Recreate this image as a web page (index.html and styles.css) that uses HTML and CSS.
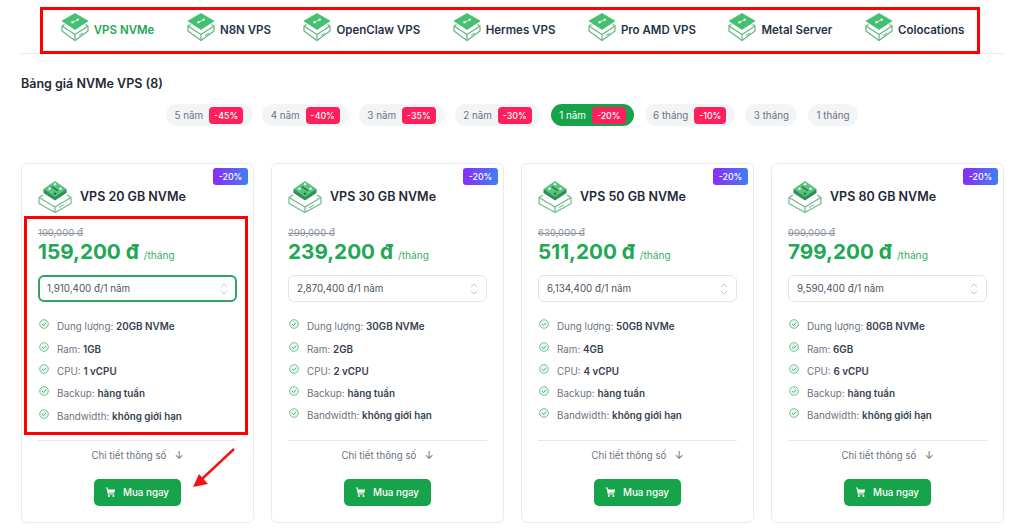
FILE: index.html
```html
<!DOCTYPE html>
<html lang="vi">
<head>
<meta charset="utf-8">
<title>Bảng giá NVMe VPS</title>
<link rel="stylesheet" href="styles.css">
</head>
<body>
<svg class="defs" width="0" height="0" aria-hidden="true">
  <symbol id="srv" viewBox="0 0 28 28">
    <path d="M3.5 11.5 L1 13 V18 L14 27.5 L27 18 V13 L24.5 11.5" fill="#fff" stroke="#62b583" stroke-width="1.2" stroke-linejoin="round"/>
    <path d="M1 13 L14 21.5 L27 13 M14 21.5 V27.5" fill="none" stroke="#62b583" stroke-width="1.2" stroke-linejoin="round"/>
    <path d="M18 22.5 L22 20" stroke="#62b583" stroke-width="1"/>
    <path d="M14 .5 L27 8 L14 16.5 L1 8 Z" fill="#45bf70" stroke="#45bf70" stroke-width=".8" stroke-linejoin="round"/>
    <path d="M11.5 9.3 L14.5 7.8 L16.8 6.6" stroke="#eafaf0" stroke-width=".9" fill="none"/>
    <circle cx="11.5" cy="9.3" r="1.2" fill="#eafaf0"/><circle cx="16.8" cy="6.6" r="1.2" fill="#eafaf0"/>
  </symbol>
  <symbol id="box" viewBox="0 0 34 33">
    <path d="M5 15 L1 17.5 V23.5 L17 32.5 L33 23.5 V17.5 L29 15" fill="#fff" stroke="#6fb98a" stroke-width="1.2" stroke-linejoin="round"/>
    <path d="M1 17.5 L17 27 L33 17.5 M17 27 V32.5" fill="none" stroke="#6fb98a" stroke-width="1.2" stroke-linejoin="round"/>
    <path d="M21 27.5 L26 24.8" stroke="#6fb98a" stroke-width="1"/>
    <path d="M5.5 9 V13 L17 20.5 L28.5 13 V9 Z" fill="#2f8f55"/>
    <path d="M17 1 L28.5 9 L17 17 L5.5 9 Z" fill="#57c47c"/>
    <circle cx="17" cy="4.2" r="1.2" fill="#f2fff6"/><circle cx="11.5" cy="8.8" r="1.2" fill="#f2fff6"/><circle cx="22.5" cy="8.8" r="1.2" fill="#f2fff6"/><circle cx="17" cy="13.6" r="1.2" fill="#1f6b3d"/>
    <path d="M14 6.8 L20 10.8" stroke="#1f6b3d" stroke-width="1.1"/>
  </symbol>
  <symbol id="chk" viewBox="0 0 12 12">
    <circle cx="6" cy="6" r="5.2" fill="#eaf7ef" stroke="#5cb982" stroke-width="1"/>
    <path d="M3.6 6.1 L5.4 7.8 L8.5 4.5" fill="none" stroke="#3da768" stroke-width="1.1"/>
  </symbol>
  <symbol id="cart" viewBox="0 0 12 12">
    <path d="M.8 1.2 H2.4 L3.6 7.6 H10" fill="none" stroke="#fff" stroke-width="1.1"/>
    <path d="M2.8 2.6 H11 L10.2 6.2 H3.4 Z" fill="#fff"/>
    <circle cx="4.2" cy="9.8" r="1.1" fill="#fff"/><circle cx="9.2" cy="9.8" r="1.1" fill="#fff"/>
  </symbol>
</svg>

<div class="page">
  <nav class="nav">
    <a class="nav-item active"><svg class="nav-icon"><use href="#srv"/></svg>VPS NVMe</a>
    <a class="nav-item"><svg class="nav-icon"><use href="#srv"/></svg>N8N VPS</a>
    <a class="nav-item"><svg class="nav-icon"><use href="#srv"/></svg>OpenClaw VPS</a>
    <a class="nav-item"><svg class="nav-icon"><use href="#srv"/></svg>Hermes VPS</a>
    <a class="nav-item"><svg class="nav-icon"><use href="#srv"/></svg>Pro AMD VPS</a>
    <a class="nav-item"><svg class="nav-icon"><use href="#srv"/></svg>Metal Server</a>
    <a class="nav-item"><svg class="nav-icon"><use href="#srv"/></svg>Colocations</a>
  </nav>

  <h2 class="title">Bảng giá NVMe VPS (8)</h2>

  <div class="tabs">
    <span class="tab">5 năm<b class="off">-45%</b></span>
    <span class="tab">4 năm<b class="off">-40%</b></span>
    <span class="tab">3 năm<b class="off">-35%</b></span>
    <span class="tab">2 năm<b class="off">-30%</b></span>
    <span class="tab on">1 năm<b class="off">-20%</b></span>
    <span class="tab">6 tháng<b class="off">-10%</b></span>
    <span class="tab">3 tháng</span>
    <span class="tab">1 tháng</span>
  </div>

  <div class="cards">
    <article class="card">
      <span class="badge">-20%</span>
      <header class="card-head"><svg class="card-icon"><use href="#box"/></svg><h3>VPS 20 GB NVMe</h3></header>
      <div class="old">199,000 đ</div>
      <div class="price"><strong>159,200 đ</strong><span>/tháng</span></div>
      <div class="select focus">1,910,400 đ/1 năm<svg class="updown" viewBox="0 0 8 14"><path d="M1 5 L4 2 L7 5 M1 9 L4 12 L7 9"/></svg></div>
      <ul class="specs">
        <li><svg class="check"><use href="#chk"/></svg><span>Dung lượng: <b>20GB NVMe</b></span></li>
        <li><svg class="check"><use href="#chk"/></svg><span>Ram: <b>1GB</b></span></li>
        <li><svg class="check"><use href="#chk"/></svg><span>CPU: <b>1 vCPU</b></span></li>
        <li><svg class="check"><use href="#chk"/></svg><span>Backup: <b>hàng tuần</b></span></li>
        <li><svg class="check"><use href="#chk"/></svg><span>Bandwidth: <b>không giới hạn</b></span></li>
      </ul>
      <div class="more">Chi tiết thông số<span class="arrow">↓</span></div>
      <a class="buy"><svg class="cart"><use href="#cart"/></svg>Mua ngay</a>
    </article>

    <article class="card">
      <span class="badge">-20%</span>
      <header class="card-head"><svg class="card-icon"><use href="#box"/></svg><h3>VPS 30 GB NVMe</h3></header>
      <div class="old">299,000 đ</div>
      <div class="price"><strong>239,200 đ</strong><span>/tháng</span></div>
      <div class="select">2,870,400 đ/1 năm<svg class="updown" viewBox="0 0 8 14"><path d="M1 5 L4 2 L7 5 M1 9 L4 12 L7 9"/></svg></div>
      <ul class="specs">
        <li><svg class="check"><use href="#chk"/></svg><span>Dung lượng: <b>30GB NVMe</b></span></li>
        <li><svg class="check"><use href="#chk"/></svg><span>Ram: <b>2GB</b></span></li>
        <li><svg class="check"><use href="#chk"/></svg><span>CPU: <b>2 vCPU</b></span></li>
        <li><svg class="check"><use href="#chk"/></svg><span>Backup: <b>hàng tuần</b></span></li>
        <li><svg class="check"><use href="#chk"/></svg><span>Bandwidth: <b>không giới hạn</b></span></li>
      </ul>
      <div class="more">Chi tiết thông số<span class="arrow">↓</span></div>
      <a class="buy"><svg class="cart"><use href="#cart"/></svg>Mua ngay</a>
    </article>

    <article class="card">
      <span class="badge">-20%</span>
      <header class="card-head"><svg class="card-icon"><use href="#box"/></svg><h3>VPS 50 GB NVMe</h3></header>
      <div class="old">639,000 đ</div>
      <div class="price"><strong>511,200 đ</strong><span>/tháng</span></div>
      <div class="select">6,134,400 đ/1 năm<svg class="updown" viewBox="0 0 8 14"><path d="M1 5 L4 2 L7 5 M1 9 L4 12 L7 9"/></svg></div>
      <ul class="specs">
        <li><svg class="check"><use href="#chk"/></svg><span>Dung lượng: <b>50GB NVMe</b></span></li>
        <li><svg class="check"><use href="#chk"/></svg><span>Ram: <b>4GB</b></span></li>
        <li><svg class="check"><use href="#chk"/></svg><span>CPU: <b>4 vCPU</b></span></li>
        <li><svg class="check"><use href="#chk"/></svg><span>Backup: <b>hàng tuần</b></span></li>
        <li><svg class="check"><use href="#chk"/></svg><span>Bandwidth: <b>không giới hạn</b></span></li>
      </ul>
      <div class="more">Chi tiết thông số<span class="arrow">↓</span></div>
      <a class="buy"><svg class="cart"><use href="#cart"/></svg>Mua ngay</a>
    </article>

    <article class="card">
      <span class="badge">-20%</span>
      <header class="card-head"><svg class="card-icon"><use href="#box"/></svg><h3>VPS 80 GB NVMe</h3></header>
      <div class="old">999,000 đ</div>
      <div class="price"><strong>799,200 đ</strong><span>/tháng</span></div>
      <div class="select">9,590,400 đ/1 năm<svg class="updown" viewBox="0 0 8 14"><path d="M1 5 L4 2 L7 5 M1 9 L4 12 L7 9"/></svg></div>
      <ul class="specs">
        <li><svg class="check"><use href="#chk"/></svg><span>Dung lượng: <b>80GB NVMe</b></span></li>
        <li><svg class="check"><use href="#chk"/></svg><span>Ram: <b>6GB</b></span></li>
        <li><svg class="check"><use href="#chk"/></svg><span>CPU: <b>6 vCPU</b></span></li>
        <li><svg class="check"><use href="#chk"/></svg><span>Backup: <b>hàng tuần</b></span></li>
        <li><svg class="check"><use href="#chk"/></svg><span>Bandwidth: <b>không giới hạn</b></span></li>
      </ul>
      <div class="more">Chi tiết thông số<span class="arrow">↓</span></div>
      <a class="buy"><svg class="cart"><use href="#cart"/></svg>Mua ngay</a>
    </article>
  </div>

  <div class="mark mark-nav"></div>
  <div class="mark mark-card"></div>
  <svg class="mark-arrow" viewBox="0 0 48 52">
    <path d="M43 3 L11 33" stroke="#f01414" stroke-width="2.4" fill="none"/>
    <path d="M2 41 L8 28 L17 38 Z" fill="#f01414"/>
  </svg>
</div>
</body>
</html>
```
FILE: styles.css
```css
* { box-sizing: border-box; }
html, body { margin: 0; padding: 0; background: #fff; }
body { font-family: Inter, "Liberation Sans", sans-serif; color: #374151; height: 532px; overflow: hidden; }
.defs { position: absolute; }
.page { position: relative; width: 1024px; height: 532px; padding: 0 20px; }

.nav { height: 54px; display: flex; justify-content: center; align-items: center; gap: 32.5px; border-bottom: 1px solid #eceef1; padding-top: 7px; padding-left: 1px; }
.nav-item { display: flex; align-items: center; gap: 5px; font-size: 11.5px; font-weight: 600; color: #27324a; white-space: nowrap; }
.nav-item.active { color: #22a755; }
.nav-icon { width: 28px; height: 28px; margin-bottom: 6px; }

.title { margin: 22px 0 0 1px; font-size: 12.5px; line-height: 16px; font-weight: 600; color: #1f2937; }

.tabs { display: flex; justify-content: center; gap: 10.5px; margin-top: 12px; }
.tab { height: 22px; display: flex; align-items: center; gap: 6px; padding: 0 8.5px; border-radius: 11px; background: #f3f4f6; color: #6b7280; font-size: 9.8px; white-space: nowrap; }
.tab.on { background: #16a34a; color: #fff; }
.off { background: #ff1f5a; color: #fff; font-weight: 500; font-size: 8.8px; height: 17px; line-height: 17px; padding: 0 5px; border-radius: 4px; }

.cards { display: grid; grid-template-columns: repeat(4, 233px); gap: 17px; margin: 37px 0 0 1px; }
.card { position: relative; height: 360px; padding: 16px; background: #fff; border: 1px solid #e9ebef; border-radius: 6px; display: flex; flex-direction: column; }
.badge { position: absolute; top: 4px; right: 5px; width: 35px; height: 17px; line-height: 17px; text-align: center; border-radius: 3px; color: #fff; font-size: 8.8px; font-weight: 500; background: linear-gradient(90deg, #8b2cf5, #3f7ff5); }

.card-head { display: flex; align-items: center; gap: 8px; height: 32px; }
.card-icon { width: 34px; height: 33px; flex: none; }
.card-head h3 { margin: 0; font-size: 12.5px; font-weight: 600; color: #1f2937; white-space: nowrap; }

.old { margin-top: 14px; font-size: 9.6px; line-height: 13px; color: #8b93a0; text-decoration: line-through; }
.price { display: flex; align-items: baseline; gap: 5px; margin-top: 0; height: 25px; }
.price strong { font-size: 20.7px; line-height: 25px; font-weight: 700; color: #22a755; white-space: nowrap; }
.price span { font-size: 10.2px; color: #35ad67; }

.select { position: relative; margin-top: 11px; height: 28px; padding: 0 8px; display: flex; align-items: center; border: 1px solid #e3e5e9; border-radius: 6px; font-size: 9.8px; color: #4b5563; }
.select.focus { border: 2px solid #2aa75c; padding: 0 7px; }
.updown { position: absolute; right: 8px; top: 6px; width: 8px; height: 14px; }
.select.focus .updown { right: 7px; top: 5px; }
.updown path { fill: none; stroke: #c4c8cf; stroke-width: 1; }

.specs { list-style: none; margin: 13px 0 0; padding: 0; }
.specs li { display: flex; align-items: flex-start; height: 22.3px; font-size: 9.85px; line-height: 22px; color: #6b7280; }
.specs b { font-weight: 600; color: #374151; }
.check { width: 10px; height: 10px; flex: none; margin: 4px 8px 0 1px; }

.more { margin-top: 13px; padding-top: 6px; height: 39px; border-top: 1px solid #e5e7eb; text-align: center; font-size: 9.7px; line-height: 16px; color: #6b7280; flex: none; }
.arrow { margin-left: 8px; font-size: 11px; color: #6b7280; }

.buy { align-self: center; display: flex; align-items: center; justify-content: center; gap: 7px; width: 87px; height: 28px; padding-right: 1px; border-radius: 5px; background: #16a34a; color: #fff; font-size: 9.8px; font-weight: 500; }
.cart { width: 11px; height: 11px; }

.mark { position: absolute; border: 3px solid #f00; pointer-events: none; }
.mark-nav { left: 40px; top: 7px; width: 940px; height: 47px; }
.mark-card { left: 24px; top: 216px; width: 224px; height: 219px; }
.mark-arrow { position: absolute; left: 191px; top: 446px; width: 48px; height: 52px; }
```
